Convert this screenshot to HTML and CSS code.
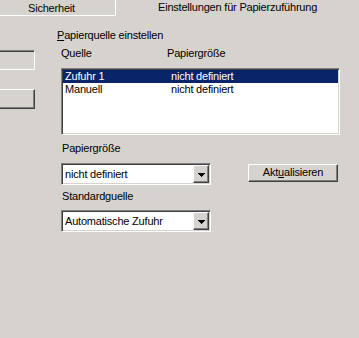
FILE: index.html
```html
<!DOCTYPE html>
<html lang="de">
<head>
    <meta charset="UTF-8">
    <title>Druckereigenschaften</title>
    <link rel="stylesheet" href="styles.css">
</head>
<body>
    <div class="tabs">
        <div class="tab">Sicherheit</div>
        <div class="tab active">Einstellungen für Papierzuführung</div>
    </div>

    <div class="content">
        <!-- Reste der linken Seite -->
        <div class="side">
            <div class="side-field"></div>
            <div class="btn side-button"></div>
        </div>

        <div class="main">
            <div class="group-label"><u>P</u>apierquelle einstellen</div>
            <div class="list-head">
                <span class="col-name">Quelle</span><span>Papiergröße</span>
            </div>
            <div class="list">
                <div class="row selected"><span class="col-name">Zufuhr 1</span><span>nicht definiert</span></div>
                <div class="row"><span class="col-name">Manuell</span><span>nicht definiert</span></div>
            </div>

            <div class="settings">
                <div class="combos">
                    <div class="label">Papiergröße</div>
                    <div class="combo">
                        <span class="combo-text">nicht definiert</span>
                        <span class="btn drop">
                            <svg width="7" height="4" viewBox="0 0 7 4" shape-rendering="crispEdges">
                                <rect x="0" y="0" width="7" height="1" fill="#000"/>
                                <rect x="1" y="1" width="5" height="1" fill="#000"/>
                                <rect x="2" y="2" width="3" height="1" fill="#000"/>
                                <rect x="3" y="3" width="1" height="1" fill="#000"/>
                            </svg>
                        </span>
                    </div>
                    <div class="label label-second">Standardguelle</div>
                    <div class="combo">
                        <span class="combo-text">Automatische Zufuhr</span>
                        <span class="btn drop">
                            <svg width="7" height="4" viewBox="0 0 7 4" shape-rendering="crispEdges">
                                <rect x="0" y="0" width="7" height="1" fill="#000"/>
                                <rect x="1" y="1" width="5" height="1" fill="#000"/>
                                <rect x="2" y="2" width="3" height="1" fill="#000"/>
                                <rect x="3" y="3" width="1" height="1" fill="#000"/>
                            </svg>
                        </span>
                    </div>
                </div>
                <div class="btn refresh">Akt<u>u</u>alisieren</div>
            </div>
        </div>
    </div>
</body>
</html>
```

FILE: styles.css
```css
* {
    box-sizing: border-box;
    margin: 0;
    padding: 0;
}
html, body {
    height: 100%;
    overflow: hidden;
}
body {
    background-color: #d6d3ce;
    color: #000;
    font-family: "Liberation Sans", Arial, sans-serif;
    font-size: 11px;
    line-height: 13px;
    letter-spacing: -0.2px;
}
u {
    text-decoration: underline;
    text-underline-offset: 1px;
}

/* Registerkarten */
.tabs {
    display: flex;
    height: 16px;
}
.tab {
    width: 116px;
    height: 16px;
    padding: 2px 0 0 28px;
    border-right: 1px solid #fff;
    border-bottom: 1px solid #fff;
}
.tab.active {
    width: auto;
    padding: 1px 0 0 0;
    margin-left: 42px;
    border: none;
}

/* Inhalt */
.content {
    display: flex;
}
.side {
    width: 35px;
    display: flex;
    flex-direction: column;
}
.side-field {
    height: 20px;
    margin-top: 34px;
    border-top: 1px solid #808080;
    border-right: 1px solid #fff;
    border-bottom: 1px solid #fff;
    box-shadow: inset 0 1px #404040, inset -1px -1px #d6d3ce;
}
.btn {
    background-color: #d6d3ce;
    border: 1px solid;
    border-color: #fff #404040 #404040 #fff;
    box-shadow: inset -1px -1px #808080;
}
.side-button {
    height: 20px;
    margin-top: 19px;
    border-left: none;
}
.main {
    margin-left: 22px;
    display: flex;
    flex-direction: column;
}
.group-label {
    margin-top: 13px;
}
.list-head {
    display: flex;
    margin-top: 5px;
    padding-left: 4px;
}
.col-name {
    width: 106px;
    flex-shrink: 0;
}
.list {
    width: 279px;
    height: 67px;
    margin: 8px 0 0 4px;
    background-color: #fff;
    border: 1px solid;
    border-color: #808080 #fff #fff #808080;
    padding: 1px;
    box-shadow: inset 1px 1px #404040, inset -1px -1px #d6d3ce;
}
.row {
    display: flex;
    height: 13px;
    padding-left: 2px;
}
.row.selected {
    background-color: #0a246a;
    color: #fff;
}

/* Auswahlfelder */
.settings {
    display: flex;
    align-items: flex-start;
}
.combos {
    width: 150px;
    margin-left: 4px;
    display: flex;
    flex-direction: column;
}
.label {
    margin-top: 7px;
    padding-left: 1px;
}
.label-second {
    margin-top: 5px;
}
.combo {
    height: 22px;
    margin-top: 8px;
    display: flex;
    justify-content: space-between;
    background-color: #fff;
    border: 1px solid;
    border-color: #808080 #fff #fff #808080;
    padding: 1px;
    box-shadow: inset 1px 1px #404040, inset -1px -1px #d6d3ce;
}
.combo + .label + .combo {
    margin-top: 7px;
}
.combo-text {
    padding-left: 2px;
    line-height: 18px;
}
.drop {
    width: 16px;
    height: 18px;
    display: flex;
    align-items: center;
    justify-content: center;
    padding-top: 1px;
}
.drop svg {
    display: block;
}
.refresh {
    width: 90px;
    height: 18px;
    margin: 29px 0 0 37px;
    text-align: center;
    line-height: 15px;
}
```
